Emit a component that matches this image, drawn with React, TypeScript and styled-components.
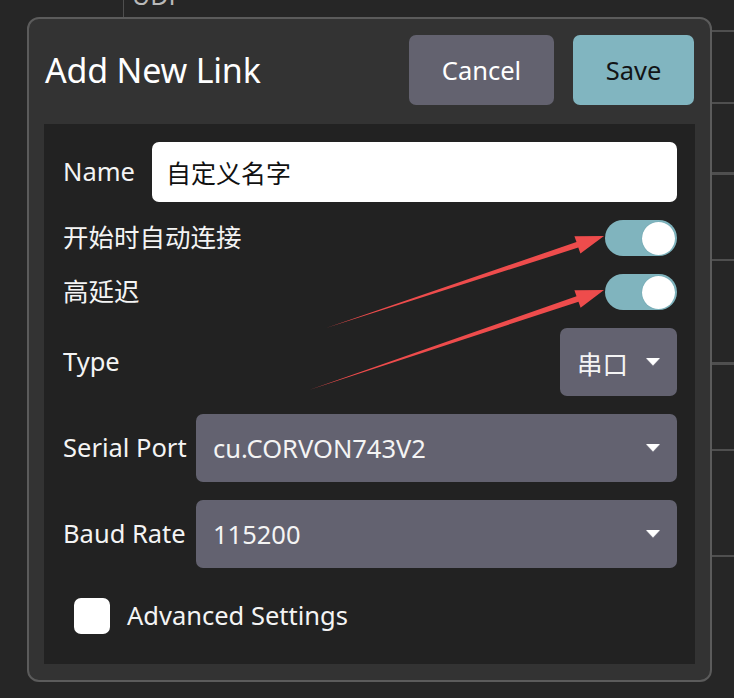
import { styled, createGlobalStyle } from "styled-components";

const GlobalStyle = createGlobalStyle`
  html, body {
    margin: 0;
    padding: 0;
    background: #262626;
  }
  body {
    font-family: "Noto Sans", "Noto Sans CJK SC", sans-serif;
    color: #f2f2f2;
  }
  * {
    box-sizing: border-box;
  }
`;

const backgroundRows = [
  { h: 72, text: "UDP" },
  { h: 72 },
  { h: 71, thick: true },
  { h: 86 },
  { h: 104, thick: true },
  { h: 86 },
  { h: 106 },
];

const Caret = () => (
  <svg width="16" height="10" viewBox="0 0 16 10">
    <polygon points="1,2 15,2 8,9.5" fill="#7c7b88" />
    <polygon points="1,1 15,1 8,8.5" fill="#ffffff" />
  </svg>
);

const Arrows = () => (
  <ArrowLayer width="734" height="698" viewBox="0 0 734 698">
    <polygon
      points="326,328 578.3,247.6 580.4,253.5 604,236 574.4,236.2 576.5,242"
      fill="#ee4c4c"
    />
    <polygon
      points="309,390 578.5,301.8 580.6,307.7 604,290 574.4,290.3 576.5,296.2"
      fill="#ee4c4c"
    />
  </ArrowLayer>
);

const App = () => {
  return (
    <>
      <GlobalStyle />
      <Screen>
        <Backdrop>
          <SideColumn />
          <Table>
            {backgroundRows.map((row, i) => (
              <TableRow key={i} $h={row.h} $thick={row.thick}>
                {row.text}
              </TableRow>
            ))}
          </Table>
        </Backdrop>

        <Modal>
          <Header>
            <Title>Add New Link</Title>
            <Button $variant="cancel">Cancel</Button>
            <Button $variant="save">Save</Button>
          </Header>

          <Panel>
            <Row>
              <Label $width={89}>Name</Label>
              <TextInput>自定义名字</TextInput>
            </Row>
            <Row $between>
              <Label>开始时自动连接</Label>
              <Toggle>
                <Knob />
              </Toggle>
            </Row>
            <Row $between>
              <Label>高延迟</Label>
              <Toggle>
                <Knob />
              </Toggle>
            </Row>
            <Row $between>
              <Label>Type</Label>
              <Select>
                <span>串口</span>
                <Caret />
              </Select>
            </Row>
            <Row>
              <Label $width={133}>Serial Port</Label>
              <Select $grow>
                <span>cu.CORVON743V2</span>
                <Caret />
              </Select>
            </Row>
            <Row>
              <Label $width={133}>Baud Rate</Label>
              <Select $grow>
                <span>115200</span>
                <Caret />
              </Select>
            </Row>
            <CheckRow>
              <Checkbox />
              <Label>Advanced Settings</Label>
            </CheckRow>
          </Panel>
        </Modal>

        <Arrows />
      </Screen>
    </>
  );
};

export default App;

const Screen = styled.div`
  position: relative;
  width: 734px;
  height: 698px;
  overflow: hidden;
  background: #262626;
`;

const Backdrop = styled.div`
  display: flex;
  align-items: flex-start;
  height: 100%;
`;

const SideColumn = styled.div`
  width: 124px;
  height: 40px;
  border-right: 1px solid #4e4e4e;
`;

const Table = styled.div`
  flex: 1;
  display: flex;
  flex-direction: column;
  margin-top: -40px;
`;

const TableRow = styled.div<{ $h: number; $thick?: boolean }>`
  flex: none;
  height: ${(p) => p.$h}px;
  display: flex;
  align-items: center;
  padding-left: 8px;
  border-bottom: ${(p) => (p.$thick ? 3 : 2)}px solid #4f4f4f;
  color: #b9b9b9;
  font-size: 25px;
`;

const Modal = styled.div`
  position: absolute;
  left: 27px;
  top: 17px;
  width: 685px;
  height: 665px;
  display: flex;
  flex-direction: column;
  padding: 16px 15px;
  background: #333333;
  border: 2px solid #5b5b5b;
  border-radius: 12px;
`;

const Header = styled.div`
  display: flex;
  align-items: center;
  gap: 19px;
  height: 70px;
  margin-bottom: 19px;
  padding-right: 1px;
`;

const Title = styled.h1`
  flex: 1;
  margin: 0 0 0 1px;
  font-size: 34px;
  font-weight: 400;
  color: #ffffff;
  letter-spacing: -0.2px;
`;

const Button = styled.button<{ $variant: "cancel" | "save" }>`
  height: 70px;
  width: ${(p) => (p.$variant === "cancel" ? 145 : 121)}px;
  border: none;
  border-radius: 7px;
  font-family: inherit;
  font-size: 25.5px;
  background: ${(p) => (p.$variant === "cancel" ? "#63626f" : "#81b5c0")};
  color: ${(p) => (p.$variant === "cancel" ? "#ffffff" : "#121416")};
`;

const Panel = styled.div`
  flex: 1;
  display: flex;
  flex-direction: column;
  gap: 18px;
  padding: 18px 18px 0 19px;
  background: #222222;
`;

const Row = styled.div<{ $between?: boolean }>`
  display: flex;
  align-items: center;
  justify-content: ${(p) => (p.$between ? "space-between" : "flex-start")};
`;

const Label = styled.span<{ $width?: number }>`
  flex: none;
  width: ${(p) => (p.$width ? `${p.$width}px` : "auto")};
  font-size: 25.5px;
  line-height: 1.3;
  color: #f4f4f4;
  white-space: nowrap;
`;

const TextInput = styled.div`
  flex: 1;
  height: 60px;
  display: flex;
  align-items: center;
  padding-left: 14px;
  background: #ffffff;
  border-radius: 7px;
  color: #111111;
  font-size: 25px;
`;

const Toggle = styled.div`
  width: 72px;
  height: 36px;
  display: flex;
  align-items: center;
  justify-content: flex-end;
  padding: 0 2px;
  background: #80b4be;
  border-radius: 18px;
`;

const Knob = styled.div`
  width: 33px;
  height: 33px;
  border-radius: 50%;
  background: #ffffff;
  box-shadow: 0 0 1px #4f8f99;
`;

const Select = styled.div<{ $grow?: boolean }>`
  flex: ${(p) => (p.$grow ? 1 : "none")};
  height: 68px;
  display: flex;
  align-items: center;
  justify-content: space-between;
  gap: 17px;
  padding: 0 16px 0 17px;
  background: #636270;
  border-radius: 7px;
  color: #f4f4f4;
  font-size: 25.5px;
`;

const CheckRow = styled.div`
  display: flex;
  align-items: center;
  gap: 17px;
  margin-top: 12px;
  padding-left: 11px;
`;

const Checkbox = styled.div`
  width: 36px;
  height: 36px;
  background: #ffffff;
  border-radius: 7px;
`;

const ArrowLayer = styled.svg`
  position: absolute;
  left: 0;
  top: 0;
  pointer-events: none;
`;
